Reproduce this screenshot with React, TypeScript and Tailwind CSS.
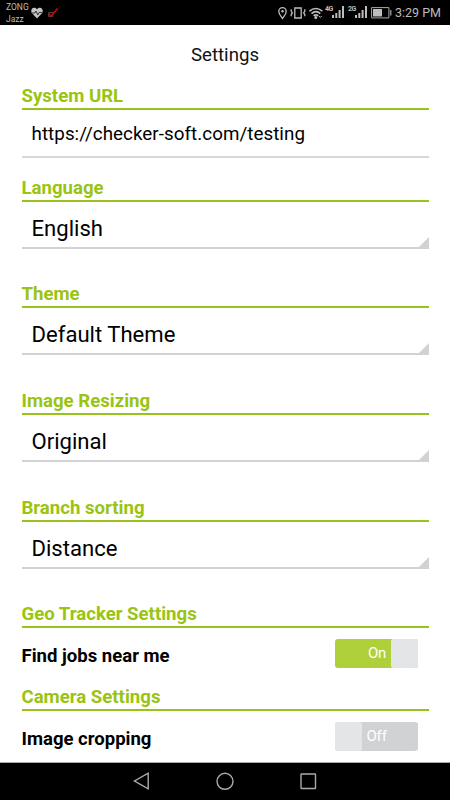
import React from "react";

function Heading({ children, className = "" }: { children: string; className?: string }) {
  return (
    <h2 className={`box-border h-[28px] shrink-0 whitespace-nowrap border-b-2 border-[#99c31c] pt-px text-[18.6px] font-bold leading-[26px] text-[#99c411] ${className}`}>
      {children}
    </h2>
  );
}

function Select({ value }: { value: string }) {
  return (
    <div className="relative h-[47px] shrink-0 border-b-2 border-[#d1d2d4] pl-[10px] text-[22.1px] leading-[53px] text-black">
      {value}
      <svg className="absolute -bottom-[2px] right-0" width="10" height="12" viewBox="0 0 10 12">
        <path d="M10 0V12H0V10Z" fill="#d1d2d4" />
      </svg>
    </div>
  );
}

function Toggle({ on }: { on: boolean }) {
  return on ? (
    <div className="mr-[10.5px] flex h-[29px] w-[83.5px] justify-end overflow-hidden rounded-[3px] bg-[#afcf3b] text-[15px] leading-[29px] text-white">
      <span className="mr-[5px] tracking-[-0.3px]">On</span>
      <span className="h-[29px] w-[27px] rounded-l-[2px] bg-[#e4e5e7]" />
    </div>
  ) : (
    <div className="mr-[10.5px] flex h-[29px] w-[83.5px] overflow-hidden rounded-[3px] bg-[#d1d2d4] text-[15px] leading-[29px] text-white">
      <span className="h-[29px] w-[27px] rounded-r-[2px] bg-[#e4e5e7]" />
      <span className="ml-[5px] tracking-[-0.2px]">Off</span>
    </div>
  );
}

function Signal() {
  return (
    <svg width="13" height="12" viewBox="0 0 13 12" fill="#bdbdbd">
      <path d="M0 9h2v3H0zM3.3 7h2v5h-2zM6.6 4h2v8h-2zM10 0h2v12h-2z" />
    </svg>
  );
}

function StatusBar() {
  return (
    <header className="flex h-[25px] shrink-0 items-start bg-black text-[#bdbdbd]">
      <div className="ml-[6px] w-[25px] shrink-0 pt-[1px] text-[8.5px] leading-[12px]">
        <div>ZONG</div>
        <div>Jazz</div>
      </div>
      <svg className="mt-[7px] shrink-0" width="12" height="12" viewBox="0 0 12 12">
        <path d="M6 11.5 1 6.3C-.5 4.3.3.8 3.1.8 4.5.8 5.4 1.4 6 2.3 6.6 1.4 7.5.8 8.9.8c2.8 0 3.6 3.5 2.1 5.5Z" fill="#c4c4c4" />
        <path d="M1 6h3l1-2 1.8 4L8 5.5h3" fill="none" stroke="#151515" strokeWidth=".8" />
      </svg>
      <svg className="ml-[4px] mt-[7px] shrink-0" width="12" height="12" viewBox="0 0 12 12" fill="none">
        <path d="M1.5 9.5v-4H6M1.5 9.5H6V7" stroke="#444" strokeWidth="1" />
        <path d="m1.6 6.2 2.2 3.2L10.7 1.2" stroke="#c40909" strokeWidth="1.6" />
      </svg>
      <svg className="ml-[219px] mt-[7px] shrink-0" width="9" height="13" viewBox="0 0 9 13" fill="none" stroke="#bdbdbd">
        <path d="M4.5 11.5C3 9.3.8 7 .8 4.4a3.7 3.7 0 0 1 7.4 0C8.2 7 6 9.3 4.5 11.5Z" strokeWidth="1.3" />
        <circle cx="4.5" cy="4.3" r="1.2" fill="#bdbdbd" stroke="none" />
      </svg>
      <svg className="ml-[3px] mt-[7px] shrink-0" width="16" height="12" viewBox="0 0 16 12" fill="none" stroke="#bdbdbd" strokeWidth="1.3">
        <path d="M4.8 1h6.4v10H4.8zM1.2 2.3v2L2.4 6 1.2 7.3v2M14.8 2.3v2L13.6 6l1.2 1.3v2" />
      </svg>
      <svg className="ml-[3px] mt-[7px] shrink-0" width="14" height="12" viewBox="0 0 14 12" fill="none" stroke="#bdbdbd" strokeWidth="1.6">
        <path d="M.5 4.2q6-5.4 12.8 0M2.5 6.6q4.4-3.8 8.8 0M4.6 8.9q2.3-2 4.6 0" />
        <circle cx="6.8" cy="10.4" r=".7" fill="#bdbdbd" />
        <path d="m10 9 1.3 1.5L12.7 9" strokeWidth="1" />
      </svg>
      <span className="ml-[2px] mt-[6px] w-[7px] shrink-0 text-[7px] font-bold leading-[7px] tracking-[-0.6px]">4G</span>
      <div className="mt-[6px] shrink-0"><Signal /></div>
      <span className="ml-[3px] mt-[6px] w-[7px] shrink-0 text-[7px] font-bold leading-[7px] tracking-[-0.6px]">2G</span>
      <div className="mt-[6px] shrink-0"><Signal /></div>
      <svg className="ml-[3px] mt-[7px] shrink-0" width="21" height="12" viewBox="0 0 21 12">
        <path d="M.6.6h17.3v10.3H.6z" fill="none" stroke="#aaa" />
        <path d="M2 2h9v7.5H2z" fill="#bdbdbd" />
        <path d="M19.2 3h1.2v5.5h-1.2z" fill="#aaa" />
      </svg>
      <span className="ml-[3px] mt-[5px] whitespace-nowrap text-[12.5px] leading-[16px]">3:29 PM</span>
    </header>
  );
}

export default function App() {
  return (
    <div className="flex h-[800px] w-[450px] flex-col overflow-hidden bg-white font-[Roboto,'Liberation_Sans',sans-serif]">
      <StatusBar />
      <main className="flex h-[738px] shrink-0 flex-col overflow-hidden border-b border-[#aaa] px-[21.5px]">
        <h1 className="h-[57px] shrink-0 text-center text-[18.67px] leading-[60px] text-[#111]">Settings</h1>
        <Heading>System URL</Heading>
        <div className="h-[48px] shrink-0 border-b-2 border-[#d8d8d8] pl-[10px] text-[18.8px] leading-[48px] tracking-[0.05px]">https://checker-soft.com/testing</div>
        <Heading className="mt-[16px]">Language</Heading>
        <Select value="English" />
        <Heading className="mt-[31px]">Theme</Heading>
        <Select value="Default Theme" />
        <Heading className="mt-[32px]">Image Resizing</Heading>
        <Select value="Original" />
        <Heading className="mt-[32px]">Branch sorting</Heading>
        <Select value="Distance" />
        <Heading className="mt-[31px]">Geo Tracker Settings</Heading>
        <div className="flex h-[55px] shrink-0 items-center justify-between pb-[5px] text-[18.55px] font-bold">
          <span className="pt-[8px]">Find jobs near me</span>
          <div className="font-normal"><Toggle on /></div>
        </div>
        <Heading>Camera Settings</Heading>
        <div className="flex h-[55px] shrink-0 items-center justify-between pb-[5px] text-[18.55px] font-bold">
          <span className="pt-[8px]">Image cropping</span>
          <div className="font-normal"><Toggle on={false} /></div>
        </div>
      </main>
      <nav className="flex h-[37px] shrink-0 items-start bg-black pl-[132px] pt-[8px]">
        <svg width="186" height="20" viewBox="0 0 186 20" fill="none" stroke="#aaaaaa" strokeWidth="1.4">
          <path d="M16.2 2.2v15.6L2.5 10Z" />
          <circle cx="93" cy="10.3" r="8" />
          <rect x="169" y="3" width="14.5" height="14.5" rx=".5" />
        </svg>
      </nav>
    </div>
  );
}
